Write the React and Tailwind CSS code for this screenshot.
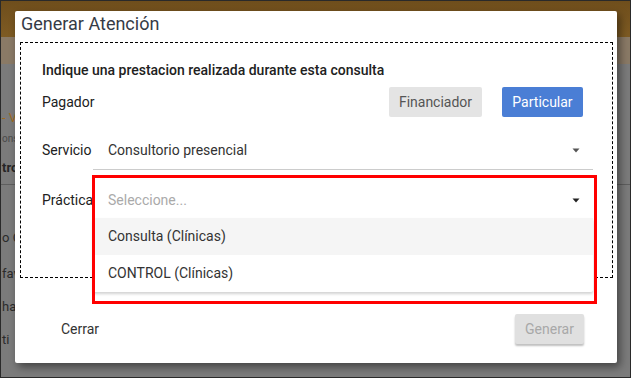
import React from 'react';

function Caret({ color = '#444' }) {
  return (
    <svg width="8" height="5" viewBox="0 0 8 5" className="shrink-0">
      <polygon points="0.5,0.5 7.5,0.5 4,4.5" fill={color} />
    </svg>
  );
}

function EdgeText({ className, children }) {
  // tail of a word peeking out at the left edge, behind the dialog
  return (
    <div className={`pl-[1px] flex items-center whitespace-nowrap ${className}`}>
      {children}
    </div>
  );
}

export default function App() {
  return (
    <div className="relative w-[631px] h-[378px] overflow-hidden border border-[#2a2a2a] bg-[#7b7b7b] font-['Roboto',sans-serif]">
      {/* --- PAGE BEHIND THE DIALOG (dimmed) --- */}
      <div className="flex flex-col">
        <div className="h-[36px] bg-gradient-to-b from-[#6f4e1c] to-[#7e5b23]" />
        <div className="h-[27px] bg-[#8a7a66]" />
        <div className="h-[120px] flex flex-col">
          <div className="h-[44px]" />
          <EdgeText className="h-[20px] text-[13px] text-[#a06a1e]">- V</EdgeText>
          <EdgeText className="h-[20px] text-[10px] text-[#4a4a4a]">ons</EdgeText>
          <div className="h-[10px]" />
          <EdgeText className="h-[20px] text-[13px] font-bold text-[#262626]">tro</EdgeText>
        </div>
        <div className="border-t border-[#5e5e5e] flex flex-col">
          <div className="h-[43px]" />
          <EdgeText className="h-[20px] text-[13px] text-[#2b2b2b]">o C</EdgeText>
          <div className="h-[16px]" />
          <EdgeText className="h-[20px] text-[13px] text-[#2b2b2b]">fav</EdgeText>
          <div className="h-[13px]" />
          <EdgeText className="h-[20px] text-[13px] text-[#2b2b2b]">ha</EdgeText>
          <div className="h-[13px]" />
          <EdgeText className="h-[20px] text-[13px] text-[#2b2b2b]">ti</EdgeText>
        </div>
      </div>

      {/* --- DIALOG --- */}
      <div className="absolute left-[14px] top-[10px] w-[602px] h-[352px] bg-white rounded-[2px] shadow-[3px_4px_8px_rgba(0,0,0,0.45)] flex flex-col">
        <h2 className="mt-[2px] ml-[6px] text-[18px] leading-[21px] text-[#353b46]">Generar Atención</h2>

        <div className="mt-[8px] ml-[5px] mr-[4px] h-[236px] border border-dashed border-black pt-[17px] pl-[21px] pr-[19px]">
          <p className="text-[14px] leading-[20px] font-medium text-[#212121]">
            Indique una prestacion realizada durante esta consulta
          </p>

          <div className="mt-[7px] h-[30px] flex items-center">
            <span className="flex-1 text-[14px] text-[#212121]">Pagador</span>
            <button className="h-[30px] w-[93px] rounded-[2px] bg-[#e4e4e4] text-[14px] text-[#555]">Financiador</button>
            <button className="ml-[20px] mr-[10px] h-[30px] w-[81px] rounded-[2px] bg-[#4a7ed5] text-[14px] text-white">Particular</button>
          </div>

          <div className="mt-[14px] flex items-center">
            <span className="w-[51px] text-[14px] text-[#212121]">Servicio</span>
            <div className="flex-1 h-[39px] border-b border-[#cccccc] flex items-center pl-[15px] pr-[13px]">
              <span className="flex-1 text-[14px] text-[#333]">Consultorio presencial</span>
              <Caret color="#555" />
            </div>
          </div>

          <div className="mt-[12px] flex items-center">
            <span className="w-[51px] whitespace-nowrap text-[14px] text-[#212121]">Práctica</span>
            <div className="relative flex-1 h-[36px] flex items-center pl-[15px] pr-[13px]">
              <span className="flex-1 text-[14px] text-[#aaaaaa]">Seleccione...</span>
              <Caret color="#222" />
              {/* --- OPEN MENU --- */}
              <div className="absolute left-0 right-0 top-full z-10 bg-white rounded-[2px] shadow-[0_2px_3px_rgba(0,0,0,0.18)]">
                <div className="h-[37px] flex items-center pl-[15px] bg-[#f5f5f5] text-[14px] text-[#333]">Consulta (Clínicas)</div>
                <div className="h-[37px] flex items-center pl-[15px] text-[14px] text-[#333]">CONTROL (Clínicas)</div>
              </div>
            </div>
          </div>
        </div>

        <div className="mt-[36px] flex items-center justify-between pl-[30px] pr-[33px]">
          <button className="h-[30px] px-[16px] text-[14px] text-[#333]">Cerrar</button>
          <button className="h-[30px] w-[69px] rounded-[2px] bg-[#e0e0e0] text-[14px] text-[#a8a8a8] shadow-[0_2px_2px_rgba(0,0,0,0.25)]">Generar</button>
        </div>

        {/* --- RED HIGHLIGHT --- */}
        <div className="absolute left-[77px] top-[164px] w-[505px] h-[129px] border-[3px] border-[#ff0000] z-20 pointer-events-none" />
      </div>
    </div>
  );
}
